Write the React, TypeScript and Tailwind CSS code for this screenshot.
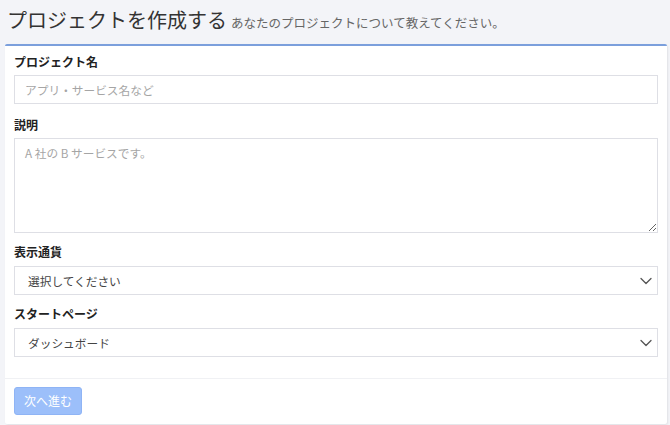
import React from "react";

const font = { fontFamily: '"Noto Sans CJK JP", "Noto Sans", sans-serif' };

function Chevron() {
  return (
    <svg width="14" height="14" viewBox="0 0 14 14" fill="none" className="text-[#555]">
      <path d="M2 4.5 L7 9.5 L12 4.5" stroke="currentColor" strokeWidth="1.3" strokeLinecap="round" strokeLinejoin="round" />
    </svg>
  );
}

function SelectBox({ value }: { value: string }) {
  return (
    <div className="mt-[4px] flex h-[29px] items-center justify-between border border-[#dedfe5] bg-white pl-[13px] pr-[4px] text-[11.7px] text-[#444]">
      <span>{value}</span>
      <Chevron />
    </div>
  );
}

function Label({ children, className = "" }: { children: React.ReactNode; className?: string }) {
  return <div className={"text-[12px] font-bold leading-[20px] text-[#222] " + className}>{children}</div>;
}

export default function App() {
  return (
    <div className="h-[425px] w-[670px] bg-[#f3f4f8] px-[5px]" style={font}>
      <div className="flex h-[44px] items-baseline gap-[4px] pl-[2px] pt-[6px]">
        <span className="text-[20px] leading-[28px] text-[#333]">プロジェクトを作成する</span>
        <span className="text-[12.5px] text-[#666]">あなたのプロジェクトについて教えてください。</span>
      </div>
      <div className="w-[662px] rounded-[2px] border-t-2 border-[#7b9fdc] bg-white shadow-[1px_1px_2px_rgba(0,0,0,0.08)]">
        <div className="px-[9px] pb-[21px] pt-[6px]">
          <Label>プロジェクト名</Label>
          <input
            className="mt-[3px] block h-[29px] w-full border border-[#dedfe5] px-[10px] text-[11.7px] text-[#444] outline-none placeholder:text-[#a5a5a5]"
            placeholder="アプリ・サービス名など"
          />
          <Label className="mt-[11px]">説明</Label>
          <textarea
            className="mt-[3px] block h-[95px] w-full border border-[#dedfe5] px-[10px] py-[5px] text-[11.7px] text-[#444] outline-none placeholder:text-[#a5a5a5]"
            placeholder="A 社の B サービスです。"
          />
          <Label className="mt-[9px]">表示通貨</Label>
          <SelectBox value="選択してください" />
          <Label className="mt-[9px]">スタートページ</Label>
          <SelectBox value="ダッシュボード" />
        </div>
        <div className="border-t border-[#f0f1f4] px-[9px] pb-[9px] pt-[8px]">
          <button className="flex h-[28px] w-[68px] items-center justify-center rounded-[3px] border border-[#8fb4f5] bg-[#9cbffa] text-[12px] text-white">
            次へ進む
          </button>
        </div>
      </div>
    </div>
  );
}
